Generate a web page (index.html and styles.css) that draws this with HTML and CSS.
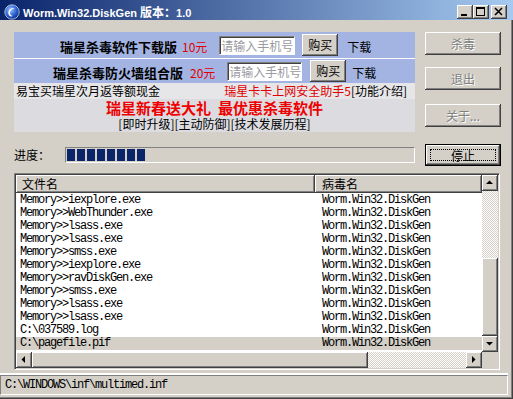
FILE: index.html
```html
<!DOCTYPE html>
<html lang="zh-CN">
<head>
  <meta charset="UTF-8" />
  <meta name="viewport" content="width=device-width, initial-scale=1.0" />
  <title>Worm.Win32.DiskGen 版本：1.0</title>
  <link rel="stylesheet" href="styles.css">
</head>
<body>
  <div class="window">
    <div class="titlebar">
      <svg class="app-icon" width="16" height="16" viewBox="0 0 16 16">
        <defs>
          <radialGradient id="orb" cx="0.4" cy="0.35" r="0.7">
            <stop offset="0" stop-color="#9cc4ff" />
            <stop offset="0.6" stop-color="#2a5fd0" />
            <stop offset="1" stop-color="#0c2a80" />
          </radialGradient>
        </defs>
        <circle cx="8" cy="8" r="7.2" fill="url(#orb)" stroke="#c8d8f0" stroke-width="0.8" />
        <path d="M10.5 4.2 C6.5 3.5 3.6 7 4.6 10.6 C5.2 12.4 7.2 12.8 8.6 12 C6.4 11.6 5.4 9.6 6.2 7.6 C7 5.6 8.8 4.6 10.5 4.2 Z" fill="#fff" />
      </svg>
      <span class="title">Worm.Win32.DiskGen <span class="title-cjk">版本：</span>1.0</span>
      <div class="caption-buttons">
        <span class="cap-btn">
          <svg width="16" height="14" viewBox="0 0 16 14"><rect x="4" y="9" width="6" height="2" fill="#000" /></svg>
        </span>
        <span class="cap-btn">
          <svg width="16" height="14" viewBox="0 0 16 14"><rect x="3.5" y="2.5" width="8" height="8" fill="none" stroke="#000" /><rect x="3" y="2" width="9" height="2" fill="#000" /></svg>
        </span>
        <span class="cap-btn close">
          <svg width="16" height="14" viewBox="0 0 16 14"><path d="M4 3 L11 10 M11 3 L4 10" stroke="#000" stroke-width="1.6" /></svg>
        </span>
      </div>
    </div>

    <div class="client">
      <div class="ad">
        <div class="ad-row buy row-one">
          <span class="product">瑞星杀毒软件下载版</span>
          <span class="price">10元</span>
          <input class="phone" type="text" placeholder="请输入手机号" />
          <button class="btn buy-btn">购买</button>
          <span class="dl">下载</span>
        </div>
        <div class="ad-row buy row-two">
          <span class="product">瑞星杀毒防火墙组合版</span>
          <span class="price">20元</span>
          <input class="phone" type="text" placeholder="请输入手机号" />
          <button class="btn buy-btn">购买</button>
          <span class="dl">下载</span>
        </div>
        <div class="ad-row info">
          <span>易宝买瑞星次月返等额现金</span>
          <span class="info-right"><span class="red">瑞星卡卡上网安全助手5</span>[功能介绍]</span>
        </div>
        <div class="ad-row promo">
          <div class="promo-title">瑞星新春送大礼&nbsp; 最优惠杀毒软件</div>
          <div class="promo-links">[即时升级][主动防御][技术发展历程]</div>
        </div>
      </div>

      <div class="side">
        <button class="btn side-btn disabled">杀毒</button>
        <button class="btn side-btn disabled quit">退出</button>
        <button class="btn side-btn disabled about">关于...</button>
      </div>

      <div class="progress-row">
        <span class="progress-label">进度：</span>
        <div class="progress">
          <i></i><i></i><i></i><i></i><i></i><i></i><i></i><i></i>
        </div>
      </div>
      <button class="btn side-btn default"><span class="focus">停止</span></button>

      <div class="list">
        <div class="view">
          <div class="list-header">
            <div class="hcell col-file">文件名</div>
            <div class="hcell col-virus">病毒名</div>
          </div>
          <div class="rows">
            <div class="row"><span class="col-file">Memory&gt;&gt;iexplore.exe</span><span class="col-virus">Worm.Win32.DiskGen</span></div>
            <div class="row"><span class="col-file">Memory&gt;&gt;WebThunder.exe</span><span class="col-virus">Worm.Win32.DiskGen</span></div>
            <div class="row"><span class="col-file">Memory&gt;&gt;lsass.exe</span><span class="col-virus">Worm.Win32.DiskGen</span></div>
            <div class="row"><span class="col-file">Memory&gt;&gt;lsass.exe</span><span class="col-virus">Worm.Win32.DiskGen</span></div>
            <div class="row"><span class="col-file">Memory&gt;&gt;smss.exe</span><span class="col-virus">Worm.Win32.DiskGen</span></div>
            <div class="row"><span class="col-file">Memory&gt;&gt;iexplore.exe</span><span class="col-virus">Worm.Win32.DiskGen</span></div>
            <div class="row"><span class="col-file">Memory&gt;&gt;ravDiskGen.exe</span><span class="col-virus">Worm.Win32.DiskGen</span></div>
            <div class="row"><span class="col-file">Memory&gt;&gt;smss.exe</span><span class="col-virus">Worm.Win32.DiskGen</span></div>
            <div class="row"><span class="col-file">Memory&gt;&gt;lsass.exe</span><span class="col-virus">Worm.Win32.DiskGen</span></div>
            <div class="row"><span class="col-file">Memory&gt;&gt;lsass.exe</span><span class="col-virus">Worm.Win32.DiskGen</span></div>
            <div class="row"><span class="col-file">C:\037589.log</span><span class="col-virus">Worm.Win32.DiskGen</span></div>
            <div class="row selected"><span class="col-file">C:\pagefile.pif</span><span class="col-virus">Worm.Win32.DiskGen</span></div>
          </div>
        </div>
        <div class="vscroll">
          <span class="sb-btn"><svg width="16" height="16" viewBox="0 0 16 16"><polygon points="4,9 11,9 7.5,5.5" fill="#000" /></svg></span>
          <span class="track v-top"></span>
          <span class="thumb v-thumb"></span>
          <span class="track fill"></span>
          <span class="sb-btn"><svg width="16" height="16" viewBox="0 0 16 16"><polygon points="4,6 11,6 7.5,9.5" fill="#000" /></svg></span>
        </div>
        <div class="hscroll">
          <span class="sb-btn"><svg width="16" height="16" viewBox="0 0 16 16"><polygon points="9,4 9,11 5.5,7.5" fill="#000" /></svg></span>
          <span class="thumb h-thumb"></span>
          <span class="track fill"></span>
          <span class="sb-btn"><svg width="16" height="16" viewBox="0 0 16 16"><polygon points="6,4 6,11 9.5,7.5" fill="#000" /></svg></span>
        </div>
        <div class="corner"></div>
      </div>
    </div>

    <div class="statusbar">C:\WINDOWS\inf\multimed.inf</div>
  </div>
</body>
</html>
```

FILE: styles.css
```css
* {
  box-sizing: border-box;
}

body {
  margin: 0;
  width: 513px;
  height: 399px;
  overflow: hidden;
  background: #d4d0c8;
  font-family: "Noto Sans CJK SC", sans-serif;
  font-size: 12px;
  color: #000;
}

.window {
  width: 513px;
  height: 399px;
  display: flex;
  flex-direction: column;
  background: #d4d0c8;
  box-shadow: inset -1px -1px #404040, inset -2px -2px #808080;
}

/* title bar */
.titlebar {
  height: 20px;
  flex: none;
  display: flex;
  align-items: center;
  padding: 4px 6px 0 4px;
  background: linear-gradient(to right, #0a246a, #a6caf0);
}

.app-icon {
  flex: none;
  margin-right: 3px;
}

.title {
  color: #fff;
  font-family: "Liberation Sans", "Noto Sans CJK SC", sans-serif;
  font-weight: bold;
  font-size: 11px;
  line-height: 14px;
  white-space: nowrap;
}

.title-cjk {
  font-family: "Noto Sans CJK SC", sans-serif;
  font-size: 12px;
}

.caption-buttons {
  margin-left: auto;
  display: flex;
}

.cap-btn {
  width: 16px;
  height: 14px;
  background: #d4d0c8;
  box-shadow: inset -1px -1px #404040, inset 1px 1px #fff, inset -2px -2px #808080;
}

.cap-btn svg {
  display: block;
}

.cap-btn.close {
  margin-left: 2px;
}

/* client area */
.client {
  display: grid;
  grid-template-columns: 401px 76px;
  column-gap: 10px;
  align-items: start;
  padding: 12px 0 0 14px;
}

.btn {
  font-family: "Noto Sans CJK SC", sans-serif;
  font-size: 12px;
  color: #000;
  background: #d4d0c8;
  border: none;
  padding: 0;
  box-shadow: inset -1px -1px #404040, inset 1px 1px #fff, inset -2px -2px #808080, inset 2px 2px #d4d0c8;
}

.btn.disabled {
  color: #808080;
  text-shadow: 1px 1px #fff;
}

/* advert panel */
.ad {
  height: 100px;
  display: flex;
  flex-direction: column;
}

.ad-row {
  display: flex;
  align-items: center;
  white-space: nowrap;
}

.ad-row.buy {
  background: #a3b4e2;
}

.row-one {
  height: 27px;
  padding-left: 46px;
  border-bottom: 1px solid #fff;
}

.row-two {
  height: 24px;
  padding-left: 39px;
}

.product {
  font-weight: bold;
  font-size: 13px;
  line-height: 16px;
  padding-top: 4px;
}

.price {
  color: #e00000;
  line-height: 16px;
  padding-top: 4px;
}

.dl {
  line-height: 16px;
  padding-top: 4px;
}

.row-one .price { margin-left: 5px; }
.row-one .phone { margin-left: 12px; width: 76px; }
.row-one .buy-btn { margin-left: 7px; }
.row-one .dl { margin-left: 9px; }

.row-two .price { margin-left: 7px; }
.row-two .phone { margin-left: 12px; width: 75px; }
.row-two .buy-btn { margin-left: 8px; }
.row-two .dl { margin-left: 6px; }

.phone {
  height: 19px;
  padding: 0 0 0 1px;
  font-family: "Noto Sans CJK SC", sans-serif;
  font-size: 12px;
  background: #fff;
  border: 1px solid;
  border-color: #808080 #fff #fff #808080;
  box-shadow: inset 1px 1px #404040;
}

.phone::placeholder {
  color: #9a9aa0;
}

.buy-btn {
  width: 36px;
  height: 22px;
  line-height: 16px;
}

.ad-row.info {
  height: 16px;
  padding: 0 8px 0 2px;
  background: #e6e6e8;
  line-height: 16px;
}

.info-right {
  margin-left: auto;
}

.red {
  color: #e00000;
}

.ad-row.promo {
  flex: 1;
  flex-direction: column;
  justify-content: flex-start;
  background: #dcdce0;
}

.promo-title {
  color: #ee0000;
  font-weight: bold;
  font-size: 15px;
  line-height: 17px;
  height: 17px;
}

.promo-links {
  line-height: 16px;
  height: 16px;
}

/* right column buttons */
.side {
  display: flex;
  flex-direction: column;
}

.side-btn {
  width: 76px;
  height: 23px;
}

.side-btn.quit {
  margin-top: 12px;
}

.side-btn.about {
  margin-top: 14px;
}

/* progress */
.progress-row {
  margin-top: 12px;
  height: 22px;
  display: flex;
  align-items: center;
}

.progress-label {
  width: 51px;
  line-height: 16px;
}

.progress {
  flex: 1;
  height: 16px;
  display: flex;
  padding: 1px;
  border: 1px solid;
  border-color: #808080 #fff #fff #808080;
}

.progress i {
  width: 8px;
  margin-right: 2px;
  background: #0a246a;
}

.side-btn.default {
  margin-top: 12px;
  height: 22px;
  display: flex;
  padding: 4px;
  border: 1px solid #000;
}

.focus {
  flex: 1;
  border: 1px dotted #000;
  line-height: 11px;
}

/* list view */
.list {
  grid-column: 1 / -1;
  margin-top: 7px;
  width: 486px;
  height: 197px;
  padding: 1px;
  border: 1px solid;
  border-color: #808080 #fff #fff #808080;
  box-shadow: inset 1px 1px #404040, inset -1px -1px #d4d0c8;
  display: grid;
  grid-template-columns: 1fr 16px;
  grid-template-rows: 1fr 16px;
}

.view {
  background: #fff;
  overflow: hidden;
}

.list-header {
  height: 18px;
  display: flex;
}

.hcell {
  background: #d4d0c8;
  line-height: 18px;
  box-shadow: inset -1px -1px #404040, inset 1px 1px #fff, inset -2px -2px #808080;
}

.hcell.col-file {
  width: 299px;
  padding-left: 6px;
}

.hcell.col-virus {
  flex: 1;
  padding-left: 7px;
}

.rows {
  padding-top: 1px;
}

.row {
  height: 13px;
  display: flex;
  font-family: "Liberation Mono", monospace;
  font-size: 12px;
  letter-spacing: -1.2px;
  line-height: 13px;
  white-space: nowrap;
}

.row .col-file {
  width: 299px;
  padding-left: 4px;
}

.row .col-virus {
  padding-left: 7px;
}

.row.selected {
  background: #d4d0c8;
}

.vscroll {
  display: flex;
  flex-direction: column;
}

.hscroll {
  display: flex;
}

.sb-btn {
  flex: none;
  width: 16px;
  height: 16px;
  background: #d4d0c8;
  box-shadow: inset -1px -1px #404040, inset 1px 1px #fff, inset -2px -2px #808080, inset 2px 2px #d4d0c8;
}

.sb-btn svg {
  display: block;
}

.track {
  background: repeating-conic-gradient(#d4d0c8 0 25%, #fff 0 50%) 0 0 / 2px 2px;
}

.track.fill {
  flex: 1;
}

.v-top {
  height: 67px;
}

.thumb {
  background: #d4d0c8;
  box-shadow: inset -1px -1px #404040, inset 1px 1px #fff, inset -2px -2px #808080, inset 2px 2px #d4d0c8;
}

.v-thumb {
  height: 78px;
}

.h-thumb {
  width: 336px;
}

.corner {
  background: #d4d0c8;
}

/* status bar */
.statusbar {
  margin: 5px 5px 0 0;
  height: 20px;
  padding-left: 4px;
  border: 1px solid;
  border-color: #808080 #fff #fff #808080;
  box-shadow: 0 -2px #fff;
  font-family: "Liberation Mono", monospace;
  font-size: 12px;
  letter-spacing: -1.2px;
  line-height: 18px;
  white-space: nowrap;
}
```
